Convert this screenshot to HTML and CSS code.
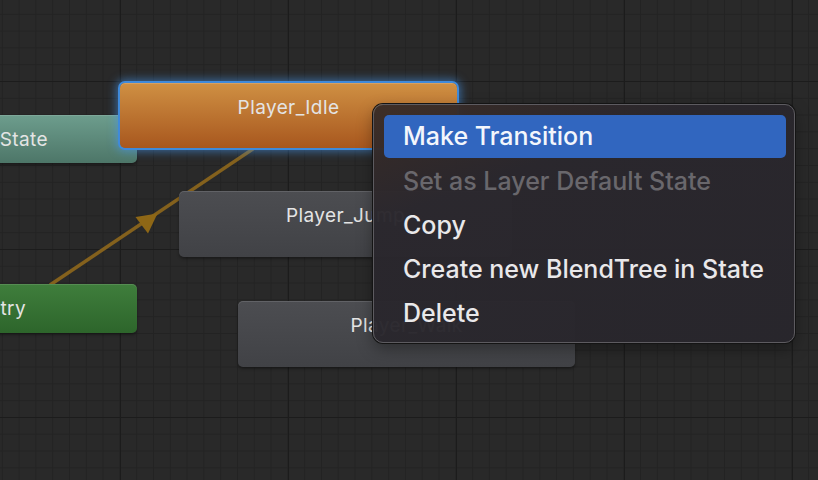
FILE: index.html
```html
<!DOCTYPE html>
<html lang="en">
<head>
<meta charset="utf-8">
<title>Animator</title>
<link rel="stylesheet" href="styles.css">
</head>
<body>
<main class="graph">
  <svg class="links" width="818" height="480" viewBox="0 0 818 480">
    <line class="link" x1="50" y1="285" x2="256" y2="147"></line>
    <polygon class="link-arrow" points="135.5,217 157.5,213.5 148,233.5"></polygon>
  </svg>

  <div class="node node-any"><span class="node-label">Any State</span></div>
  <div class="node node-entry"><span class="node-label">Entry</span></div>
  <div class="node node-state node-idle"><span class="node-label">Player_Idle</span></div>
  <div class="node node-state node-jump"><span class="node-label">Player_Jump</span></div>
  <div class="node node-state node-walk"><span class="node-label">Player_Walk</span></div>

  <nav class="menu">
    <ul class="menu-list">
      <li class="menu-item is-active">Make Transition</li>
      <li class="menu-item is-disabled">Set as Layer Default State</li>
      <li class="menu-item">Copy</li>
      <li class="menu-item">Create new BlendTree in State</li>
      <li class="menu-item">Delete</li>
    </ul>
  </nav>
</main>
</body>
</html>
```

FILE: styles.css
```css
* { box-sizing: border-box; }

html, body {
  margin: 0;
  padding: 0;
  background: #282828;
}

.graph {
  position: relative;
  width: 818px;
  height: 480px;
  overflow: hidden;
  font-family: "Inter", "Noto Sans", sans-serif;
  background-color: #292929;
  background-image:
    linear-gradient(to right, #1c1c1c 1px, transparent 1px),
    linear-gradient(to bottom, #1c1c1c 1px, transparent 1px),
    linear-gradient(to right, #232323 1px, transparent 1px),
    linear-gradient(to bottom, #232323 1px, transparent 1px);
  background-size: 168px 168px, 168px 168px, 16.8px 16.8px, 16.8px 16.8px;
  background-position: 120px 81px, 120px 81px, 1.8px 13.8px, 1.8px 13.8px;
}

.links {
  position: absolute;
  left: 0;
  top: 0;
}

.link {
  stroke: #84611d;
  stroke-width: 3.5;
}

.link-arrow {
  fill: #8e6716;
}

/* diagram nodes sit on a free canvas */
.node {
  position: absolute;
  display: flex;
  justify-content: center;
  align-items: center;
  border-radius: 5px;
  color: #e4e4e4;
  font-size: 19px;
  letter-spacing: 0.4px;
  box-shadow: inset 0 1px 0 rgba(255, 255, 255, 0.12), 0 2px 3px rgba(0, 0, 0, 0.35);
}

.node-label {
  white-space: nowrap;
}

.node-any {
  left: -131px;
  top: 115px;
  width: 268px;
  height: 48px;
  background: linear-gradient(to bottom, #6d9d8d, #4d7668);
}

.node-entry {
  left: -134px;
  top: 284px;
  width: 271px;
  height: 49px;
  background: linear-gradient(to bottom, #3f7e3c, #2d652b);
}

.node-state {
  height: 65px;
  align-items: flex-start;
  padding-top: 12px;
  line-height: 25px;
}

.node-idle {
  left: 120px;
  top: 83px;
  width: 337px;
  background: linear-gradient(to bottom, #cf9043, #a8571e);
  box-shadow: 0 0 0 2px #3f8ada, 0 0 8px 4px rgba(70, 150, 235, 0.55), inset 0 1px 0 rgba(255, 255, 255, 0.15);
}

.node-jump {
  left: 179px;
  top: 191px;
  width: 333px;
  height: 66px;
  background: linear-gradient(to bottom, #4c4d51, #414246);
}

.node-walk {
  left: 238px;
  top: 301px;
  width: 337px;
  height: 66px;
  background: linear-gradient(to bottom, #4c4d51, #414246);
}

/* context menu overlays the graph */
.menu {
  position: absolute;
  left: 373px;
  top: 104px;
  width: 422px;
  height: 239px;
  border-radius: 10px;
  border: 1px solid #5d5b60;
  background: linear-gradient(160deg, rgba(58, 44, 38, 0.97) 0%, rgba(42, 39, 45, 0.97) 30%, rgba(40, 38, 44, 0.97) 100%);
  box-shadow: 0 0 0 1px #141414, 0 6px 16px rgba(0, 0, 0, 0.35);
  padding: 10px 8px 7px 10px;
}

.menu-list {
  list-style: none;
  margin: 0;
  padding: 0;
  display: flex;
  flex-direction: column;
}

.menu-item {
  height: 44px;
  display: flex;
  align-items: center;
  padding: 0 0 1px 19px;
  border-radius: 5px;
  font-family: "Inter", "Noto Sans", sans-serif;
  font-size: 25px;
  font-weight: 500;
  color: #e9e8ea;
  white-space: nowrap;
}

.menu-item.is-active {
  height: 43px;
  margin-bottom: 1px;
  background: #3166bf;
  color: #f3f6fc;
}

.menu-item.is-disabled {
  color: #69676c;
}
```
